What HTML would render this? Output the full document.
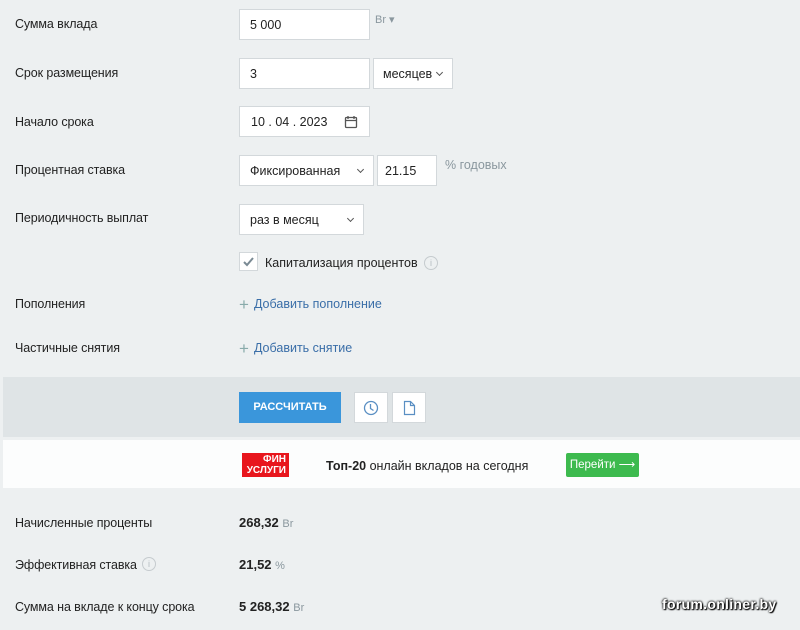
<!DOCTYPE html>
<html><head><meta charset="utf-8"><style>
*{box-sizing:border-box;margin:0;padding:0}
body{width:800px;height:630px;background:#edf0f1;font-family:"Liberation Sans","DejaVu Sans",sans-serif;font-size:12.5px;color:#222;position:relative;overflow:hidden}
.a{position:absolute}
.lbl{left:15px;letter-spacing:-0.1px}
.in{background:#fff;border:1px solid #d3d8db;height:31px;line-height:31px;padding-left:10px;font-size:12.5px;color:#222}
.sel:after{content:"";position:absolute;right:10px;top:11px;width:4px;height:4px;border-right:1.3px solid #555;border-bottom:1.3px solid #555;transform:rotate(45deg)}
.gray{color:#8a979e}
.link{color:#3a6ea8}
.plus{color:#8aa;font-size:17px;margin-right:5px;vertical-align:-2px}
</style></head><body>
<div class="a lbl" style="top:17px">Сумма вклада</div>
<div class="a in" style="left:239px;top:9px;width:131px">5 000</div>
<div class="a gray" style="left:375px;top:13px;font-size:11px">Br ▾</div>

<div class="a lbl" style="top:66px">Срок размещения</div>
<div class="a in" style="left:239px;top:58px;width:131px">3</div>
<div class="a in sel" style="left:373px;top:58px;width:80px;padding-left:9px">месяцев</div>

<div class="a lbl" style="top:115px">Начало срока</div>
<div class="a in" style="left:239px;top:106px;width:131px;padding-left:11px">10 . 04 . 2023
<svg class="a" style="left:104px;top:8px" width="14" height="14" viewBox="0 0 14 14"><rect x="1.5" y="2.5" width="11" height="10" rx="1" fill="none" stroke="#555" stroke-width="1.3"/><path d="M1.5 5.5h11M4 1v3M10 1v3" stroke="#555" stroke-width="1.3"/></svg></div>

<div class="a lbl" style="top:163px">Процентная ставка</div>
<div class="a in sel" style="left:239px;top:155px;width:135px">Фиксированная</div>
<div class="a in" style="left:377px;top:155px;width:60px;padding-left:7px">21.15</div>
<div class="a gray" style="left:445px;top:158px">% годовых</div>

<div class="a lbl" style="top:211px">Периодичность выплат</div>
<div class="a in sel" style="left:239px;top:204px;width:125px">раз в месяц</div>

<div class="a" style="left:239px;top:252px;width:19px;height:19px;background:#fff;border:1px solid #d3d8db"><svg width="17" height="17"><path d="M4 9l3 3 6-7" fill="none" stroke="#7a8a94" stroke-width="2"/></svg></div>
<div class="a" style="left:265px;top:256px">Капитализация процентов</div>
<div class="a" style="left:424px;top:256px;width:14px;height:14px;border:1px solid #c5cbce;border-radius:50%;font-size:9px;color:#b5bcc0;text-align:center;line-height:12px">i</div>

<div class="a lbl" style="top:297px">Пополнения</div>
<div class="a link" style="left:239px;top:295px"><span class="plus">+</span>Добавить пополнение</div>
<div class="a lbl" style="top:341px">Частичные снятия</div>
<div class="a link" style="left:239px;top:339px"><span class="plus">+</span>Добавить снятие</div>

<div class="a" style="left:3px;top:377px;width:797px;height:60px;background:#dfe4e6"></div>
<div class="a" style="left:239px;top:392px;width:102px;height:31px;background:#3a96db;color:#fff;font-weight:bold;font-size:11px;text-align:center;line-height:31px">РАССЧИТАТЬ</div>
<div class="a" style="left:354px;top:392px;width:34px;height:31px;background:#fff;border:1px solid #d3d8db"><svg class="a" style="left:8px;top:7px" width="16" height="16"><circle cx="8" cy="8" r="6.5" fill="none" stroke="#5a8fc3" stroke-width="1.3"/><path d="M7.5 4v4.5l3 2" fill="none" stroke="#5a8fc3" stroke-width="1.3"/></svg></div>
<div class="a" style="left:392px;top:392px;width:34px;height:31px;background:#fff;border:1px solid #d3d8db"><svg class="a" style="left:10px;top:7px" width="14" height="16"><path d="M1.5 1.5h6l4 4v9h-10z M7.5 1.5v4h4" fill="none" stroke="#5a8fc3" stroke-width="1.2"/></svg></div>

<div class="a" style="left:3px;top:440px;width:797px;height:48px;background:#fcfdfd"></div>
<div class="a" style="left:242px;top:453px;width:47px;height:24px;background:#e8161d;color:#fff;font-weight:bold;font-size:10px;line-height:11px;text-align:right;padding:1px 3px 0 0">ФИН<br>УСЛУГИ</div>
<div class="a" style="left:326px;top:459px;font-size:12.5px"><b>Топ-20</b> онлайн вкладов на сегодня</div>
<div class="a" style="left:566px;top:453px;width:73px;height:24px;background:#3dba4e;color:#fff;font-size:11.5px;line-height:24px;text-align:center;border-radius:2px">Перейти ⟶</div>

<div class="a lbl" style="top:516px">Начисленные проценты</div>
<div class="a" style="left:239px;top:515px;font-size:13px"><b>268,32</b> <span class="gray" style="font-size:11px">Br</span></div>
<div class="a lbl" style="top:558px">Эффективная ставка</div>
<div class="a" style="left:142px;top:557px;width:14px;height:14px;border:1px solid #c5cbce;border-radius:50%;font-size:9px;color:#b5bcc0;text-align:center;line-height:12px">i</div>
<div class="a" style="left:239px;top:557px;font-size:13px"><b>21,52</b> <span class="gray" style="font-size:11px">%</span></div>
<div class="a lbl" style="top:600px">Сумма на вкладе к концу срока</div>
<div class="a" style="left:239px;top:599px;font-size:13px"><b>5 268,32</b> <span class="gray" style="font-size:11px">Br</span></div>
<div class="a" style="left:662px;top:596px;color:#fff;font-weight:bold;font-size:14px;letter-spacing:0.3px;text-shadow:0 0 2px #000,0 0 2px #000,1px 1px 1px #000">forum.onliner.by</div>
</body></html>
